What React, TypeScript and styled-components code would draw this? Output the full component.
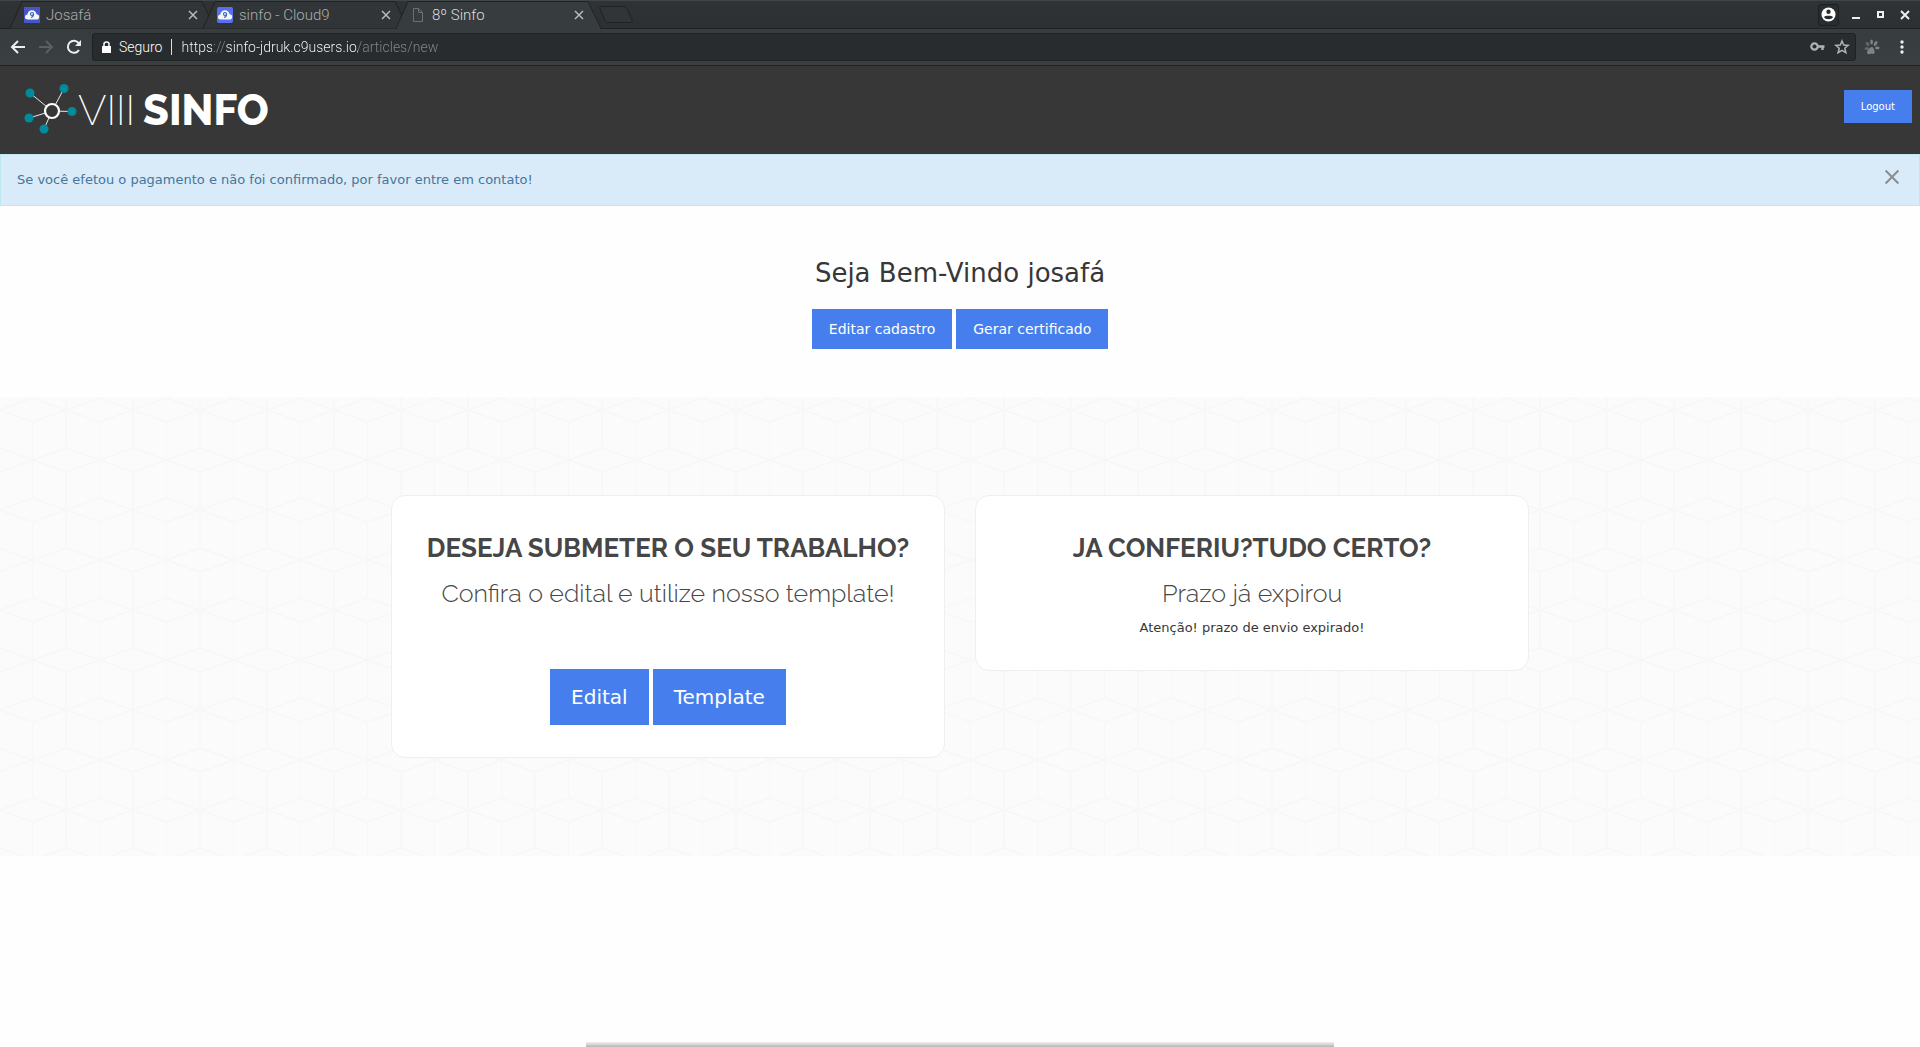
import React from "react";
import styled, { createGlobalStyle } from "styled-components";

const UI_FONT = `"Roboto", "Liberation Sans", sans-serif`;
const BODY_FONT = `"DejaVu Sans", Verdana, sans-serif`;
const TITLE_FONT = `Raleway, "Lato", sans-serif`;

/* Upper and lower rhombi are interleaved: one set is centred on the tile, the other on its edges. */
const cubePattern = encodeURIComponent(
  `<svg xmlns="http://www.w3.org/2000/svg" width="67" height="100"><g fill="none" stroke="#f7f7f7" stroke-width="1.4"><path d="M33.5 63L67 51M33.5 63L0 51M33.5 63L67 75M33.5 63L0 75"/><path d="M0 13L33.5 1L67 13M0 13L33.5 25L67 13"/><path d="M33.5 25V101M33.5 0V1M0 0V51M0 75V100M67 0V51M67 75V100"/></g></svg>`
);

const GlobalStyle = createGlobalStyle`
  *, *::before, *::after { box-sizing: border-box; }
  html, body, #root { height: 100%; }
  body { margin: 0; background: #fefefe; color: #373737; font: 13px/20px ${BODY_FONT}; }
  button, input { font: inherit; }
  h1, h2, h3, p { margin: 0; }
`;

const Window = styled.div`
  display: flex;
  flex-direction: column;
  min-height: 100%;
`;

const TabStrip = styled.div`
  display: flex;
  align-items: flex-end;
  height: 29px;
  padding: 0 7px 0 10px;
  background: linear-gradient(#2f3335, #2c3032);
  border-top: 1px solid #3f4548;
  border-bottom: 1px solid #1f2223;
  font: 300 15px/20px ${UI_FONT};
`;

const TabList = styled.div`
  display: flex;
  flex: 1;
`;

const TabBox = styled.div<{ $active?: boolean }>`
  position: relative;
  z-index: ${(p) => (p.$active ? 2 : 0)};
  display: flex;
  align-items: center;
  gap: 6px;
  width: 205px;
  height: 28px;
  margin: 0 -12px -1px 0;
  padding: 0 17px 0 14px;
  color: ${(p) => (p.$active ? "#dcdedf" : "#a9adaf")};
`;

const TabShape = styled.svg`
  position: absolute;
  inset: 0;
  z-index: -1;
  width: 100%;
  height: 100%;
`;

const TabTitle = styled.button`
  flex: 1;
  padding: 0;
  border: 0;
  background: none;
  color: inherit;
  text-align: left;
`;

const IconButton = styled.button<{ $w?: number; $color?: string }>`
  display: flex;
  align-items: center;
  justify-content: center;
  flex: none;
  width: ${(p) => p.$w ?? 17}px;
  height: 22px;
  padding: 0;
  border: 0;
  background: none;
  color: ${(p) => p.$color ?? "#eeeeee"};
`;

const NewTab = styled(IconButton)`
  margin: 3px 0 0 10px;
`;

const WindowControls = styled.div`
  display: flex;
  align-items: center;
  gap: 8px;
  height: 27px;
`;

const ProfileButton = styled(IconButton)`
  border: 1px solid #1d2021;
  border-radius: 3px;
  background: #2a2d2f;
`;

const Toolbar = styled.div`
  display: flex;
  align-items: center;
  height: 37px;
  padding: 0 4px 0 8px;
  gap: 8px;
  background: linear-gradient(#373c3f, #3a3f42);
  border-bottom: 1px solid #1f2223;
`;

const NavGroup = styled.div`
  display: flex;
  gap: 8px;
`;

const AddressBar = styled.div`
  display: flex;
  align-items: center;
  flex: 1;
  height: 28px;
  padding: 0 4px 0 9px;
  border: 1px solid #1f2223;
  border-radius: 3px;
  background: #282c2e;
  color: #ffffff;
  font: 300 14px/20px ${UI_FONT};
`;

const SecureLabel = styled.label`
  margin: 0 9px 0 8px;
  padding-right: 9px;
  border-right: 1px solid #dddddd;
  line-height: 16px;
`;

const UrlInput = styled.input`
  flex: 1;
  padding: 0;
  border: 0;
  outline: 0;
  color: transparent;
  background: linear-gradient(
    90deg,
    #ffffff 31px,
    #85898b 31px 45px,
    #ffffff 45px 177px,
    #85898b 177px
  );
  background-clip: text;
`;

const SiteHeader = styled.header`
  display: flex;
  align-items: center;
  justify-content: space-between;
  height: 88px;
  padding: 0 8px 8px 20px;
  background: #373737;
`;

const Brand = styled.a`
  display: flex;
  align-items: center;
  color: #ffffff;
  font: 800 42px/40px ${TITLE_FONT};
  text-decoration: none;
`;

const BrandMark = styled.svg`
  width: 58px;
  height: 54px;
  margin-top: 10px;
`;

const BrandThin = styled.span`
  margin-right: 8px;
  font-weight: 200;
`;

const BrandText = styled.span`
  padding-top: 10px;
`;

const Button = styled.button<{ $size: "small" | "medium" | "large" }>`
  border: 0;
  background: #467fed;
  color: #ffffff;
  ${(p) =>
    ({
      small: "padding: 0 17px; font-size: 10px; line-height: 33px;",
      medium: "padding: 0 17px; font-size: 14px; line-height: 40px;",
      large: "padding: 0 21px; font-size: 20px; line-height: 56px;",
    })[p.$size]}
`;

const Alert = styled.div`
  display: flex;
  justify-content: space-between;
  padding: 15px 19px 15px 16px;
  border: 1px solid #bce8f1;
  background: #d9ebf8;
  color: #46759c;
`;

const AlertClose = styled(IconButton)`
  height: 14px;
`;

const Welcome = styled.section`
  display: flex;
  flex-direction: column;
  align-items: center;
  padding: 50px 16px 48px;
`;

const WelcomeTitle = styled.h1`
  margin-bottom: 19px;
  font-size: 26px;
  line-height: 34px;
  font-weight: 400;
`;

const ButtonRow = styled.div`
  display: flex;
  justify-content: center;
  gap: 4px;
`;

const Submissions = styled.section`
  padding: 98px 16px;
  background: #fbfbfb url("data:image/svg+xml,${cubePattern}") -1px 0;
`;

const CardGrid = styled.div`
  display: grid;
  grid-template-columns: 1fr 1fr;
  align-items: start;
  gap: 30px;
  max-width: 1138px;
  margin: 0 auto;
`;

const Card = styled.article`
  padding: 35px 31px 32px;
  border: 1px solid #efefef;
  border-radius: 14px;
  background: #ffffff;
  text-align: center;
`;

const CardTitle = styled.h2`
  color: #464646;
  font: 700 26px/34px ${TITLE_FONT};
`;

const CardSubtitle = styled.h3`
  margin: 13px 0 10px;
  color: #464646;
  font: 300 25px/30px ${TITLE_FONT};
`;

const CardActions = styled(ButtonRow)`
  margin-top: 61px;
`;

const Dock = styled.div`
  width: 39%;
  height: 5px;
  margin: auto auto 0;
  background: linear-gradient(#f2f2f2, #b4b4b4);
`;

const CloudIcon = ({ light }: { light?: boolean }) => (
  <svg width="16" height="16" viewBox="0 0 16 16" aria-hidden="true">
    <rect width="16" height="16" rx={light ? 2 : 0} fill={light ? "#5a6ff0" : "#4456c8"} />
    <path
      d="M4 12.5C1.6 12.5.8 11 1 9.700C1.200 8.300 2.300 7.600 3.400 7.500C3.600 5 5.500 3.300 8 3.300S12.300 5 12.600 7.300C14.200 7.400 15.200 8.500 15.200 9.900C15.200 11.500 14 12.500 12.500 12.500Z"
      fill="#f4f6f8"
    />
    <circle cx="8" cy="7" r="1.500" fill="none" stroke="#3b62c4" strokeWidth="1.200" />
    <path d="M9.500 7C9.500 9 8.600 10.200 7 10.500" fill="none" stroke="#3b62c4" strokeWidth="1.200" />
  </svg>
);

const PageIcon = () => (
  <svg width="16" height="16" viewBox="0 0 16 16" aria-hidden="true">
    <path d="M3.500 1.500H8.500L12.500 5.500V14.500H3.500ZM8.500 1.500V5.500H12.500" fill="none" stroke="#6c7173" />
  </svg>
);

const Cross = ({ size, width = 2 }: { size: number; width?: number }) => (
  <svg width={size} height={size} viewBox="0 0 10 10" aria-hidden="true">
    <path d="M1 1L9 9M9 1L1 9" stroke="currentColor" strokeWidth={width} />
  </svg>
);

type TabProps = { title: string; icon: React.ReactNode; active?: boolean };

const Tab = ({ title, icon, active }: TabProps) => (
  <TabBox $active={active}>
    <TabShape viewBox="0 0 205 28" preserveAspectRatio="none" aria-hidden="true">
      <path d="M0 27.500L12 .5H192L205 27.500" fill={active ? "#373c3f" : "#313537"} stroke="#1f2223" />
      {active && <path d="M1 27.500H204" stroke="#373c3f" strokeWidth="2" />}
    </TabShape>
    {icon}
    <TabTitle role="tab" aria-selected={!!active}>
      {title}
    </TabTitle>
    <IconButton $w={10} $color="#b8bbbc" aria-label={`Fechar ${title}`}>
      <Cross size={10} width={1.5} />
    </IconButton>
  </TabBox>
);

const Browser = () => (
  <>
    <TabStrip>
      <TabList role="tablist">
        <Tab title="Josafá" icon={<CloudIcon />} />
        <Tab title="sinfo - Cloud9" icon={<CloudIcon light />} />
        <Tab title="8º Sinfo" icon={<PageIcon />} active />
        <NewTab $w={35} $color="#1f2223" aria-label="Nova guia">
          <svg width="35" height="18" viewBox="0 0 35 18">
            <path
              d="M2 .5H25Q27 .5 28 2.500L33 14Q34 16.500 32 16.500H9Q7 16.500 6 14.500L1 3Q0 .5 2 .5Z"
              fill="#313537"
              stroke="currentColor"
            />
          </svg>
        </NewTab>
      </TabList>
      <WindowControls>
        <ProfileButton $w={21} aria-label="Perfil">
          <svg width="15" height="15" viewBox="0 0 15 15">
            <circle cx="7.500" cy="7.500" r="7" fill="#ffffff" />
            <circle cx="7.500" cy="4.800" r="2.200" fill="#2a2d2f" />
            <path d="M3 10C4 8.200 11 8.200 12 10C11 13 4 13 3 10Z" fill="#2a2d2f" />
          </svg>
        </ProfileButton>
        <IconButton aria-label="Minimizar">
          <svg width="10" height="10" viewBox="0 0 10 10">
            <path d="M1 8H9" stroke="currentColor" strokeWidth="2" />
          </svg>
        </IconButton>
        <IconButton aria-label="Maximizar">
          <svg width="7" height="7" viewBox="0 0 7 7">
            <path d="M1 1H6V6H1Z" fill="none" stroke="currentColor" strokeWidth="2" />
          </svg>
        </IconButton>
        <IconButton $w={16} aria-label="Fechar janela">
          <Cross size={10} width={2} />
        </IconButton>
      </WindowControls>
    </TabStrip>
    <Toolbar>
      <NavGroup>
        <IconButton $w={20} aria-label="Voltar">
          <svg width="16" height="16" viewBox="0 0 16 16">
            <path d="M15 8H2M8 2L2 8L8 14" fill="none" stroke="currentColor" strokeWidth="2" />
          </svg>
        </IconButton>
        <IconButton $w={20} $color="#5a6063" aria-label="Avançar">
          <svg width="16" height="16" viewBox="0 0 16 16">
            <path d="M1 8H14M8 2L14 8L8 14" fill="none" stroke="currentColor" strokeWidth="2" />
          </svg>
        </IconButton>
        <IconButton $w={20} aria-label="Recarregar">
          <svg width="16" height="16" viewBox="0 0 16 16">
            <path d="M13 11A6 6 0 1 1 12.500 4" fill="none" stroke="currentColor" strokeWidth="2" />
            <path d="M15 1V7H9Z" fill="currentColor" />
          </svg>
        </IconButton>
      </NavGroup>
      <AddressBar>
        <svg width="9" height="12" viewBox="0 0 9 12" aria-hidden="true">
          <path d="M0 5H9V12H0Z" fill="currentColor" />
          <path d="M2 5.500V3Q2 1 4.500 1T7 3V5.500" fill="none" stroke="currentColor" strokeWidth="1.500" />
        </svg>
        <SecureLabel htmlFor="url">Seguro</SecureLabel>
        <UrlInput id="url" defaultValue="https://sinfo-jdruk.c9users.io/articles/new" spellCheck={false} />
        <IconButton $w={32} $color="#b0b3b4" aria-label="Salvar senha">
          <svg width="15" height="10" viewBox="0 0 15 10">
            <circle cx="4.500" cy="4.500" r="3.200" fill="none" stroke="currentColor" strokeWidth="2.200" />
            <path d="M7.500 4.500H14.500M12.500 4.500V8" fill="none" stroke="currentColor" strokeWidth="2.400" />
          </svg>
        </IconButton>
        <IconButton $w={18} $color="#b0b3b4" aria-label="Favoritar">
          <svg width="16" height="16" viewBox="0 0 16 16">
            <path
              d="M8 2L9.700 6.100L14.200 6.400L10.800 9.300L11.900 13.700L8 11.300L4.100 13.700L5.200 9.300L1.800 6.400L6.300 6.100Z"
              fill="none"
              stroke="currentColor"
              strokeWidth="1.500"
            />
          </svg>
        </IconButton>
      </AddressBar>
      <IconButton $w={16} $color="#7e8385" aria-label="Extensão">
        <svg width="16" height="16" viewBox="0 0 16 16" fill="currentColor">
          <ellipse cx="2.800" cy="9.500" rx="2.300" ry="1.500" opacity=".6" />
          <ellipse cx="3.600" cy="5" rx="1.500" ry="2.400" transform="rotate(-40 3.600 5)" opacity=".6" />
          <ellipse cx="7.600" cy="2.900" rx="1.400" ry="2.500" />
          <ellipse cx="11.600" cy="4.500" rx="1.500" ry="2.600" transform="rotate(35 11.600 4.500)" />
          <ellipse cx="13.300" cy="9" rx="2.300" ry="1.400" />
          <path d="M3 14C2.500 12.500 5.500 8.500 7.500 8C9.500 8 10 10 10.500 12C11.500 15 9 15.500 7.500 14.500C6 15.500 3.500 15.500 3 14Z" />
        </svg>
      </IconButton>
      <IconButton $w={28} aria-label="Menu">
        <svg width="4" height="14" viewBox="0 0 4 14" fill="currentColor">
          <circle cx="2" cy="2" r="1.700" />
          <circle cx="2" cy="7" r="1.700" />
          <circle cx="2" cy="12" r="1.700" />
        </svg>
      </IconButton>
    </Toolbar>
  </>
);

const nodes = [
  [10, 9],
  [44, 4.5],
  [52, 27.5],
  [9, 34],
  [24, 45],
];

const Logo = () => (
  <Brand href="#" aria-label="VIII SINFO">
    <BrandMark viewBox="0 0 58 54" aria-hidden="true">
      {nodes.map(([x, y]) => (
        <path key={x + y} d={`M32 27L${x} ${y}`} stroke="#e8e8e8" />
      ))}
      <circle cx="32" cy="27" r="7" fill="#373737" stroke="#ffffff" strokeWidth="2.200" />
      {nodes.map(([x, y]) => (
        <circle key={x + y} cx={x} cy={y} r="4.500" fill="#008b9c" />
      ))}
    </BrandMark>
    <BrandText>
      <BrandThin>VIII</BrandThin>SINFO
    </BrandText>
  </Brand>
);

export default function App() {
  return (
    <Window>
      <GlobalStyle />
      <Browser />
      <SiteHeader>
        <Logo />
        <Button $size="small">Logout</Button>
      </SiteHeader>
      <main>
        <Alert role="alert">
          <span>Se você efetou o pagamento e não foi confirmado, por favor entre em contato!</span>
          <AlertClose $w={16} $color="#8b8f91" aria-label="Fechar aviso">
            <Cross size={18} width={1.3} />
          </AlertClose>
        </Alert>
        <Welcome>
          <WelcomeTitle>Seja Bem-Vindo josafá</WelcomeTitle>
          <ButtonRow>
            <Button $size="medium">Editar cadastro</Button>
            <Button $size="medium">Gerar certificado</Button>
          </ButtonRow>
        </Welcome>
        <Submissions>
          <CardGrid>
            <Card>
              <CardTitle>DESEJA SUBMETER O SEU TRABALHO?</CardTitle>
              <CardSubtitle>Confira o edital e utilize nosso template!</CardSubtitle>
              <CardActions>
                <Button $size="large">Edital</Button>
                <Button $size="large">Template</Button>
              </CardActions>
            </Card>
            <Card>
              <CardTitle>JA CONFERIU?TUDO CERTO?</CardTitle>
              <CardSubtitle>Prazo já expirou</CardSubtitle>
              <p>Atenção! prazo de envio expirado!</p>
            </Card>
          </CardGrid>
        </Submissions>
      </main>
      <Dock />
    </Window>
  );
}
